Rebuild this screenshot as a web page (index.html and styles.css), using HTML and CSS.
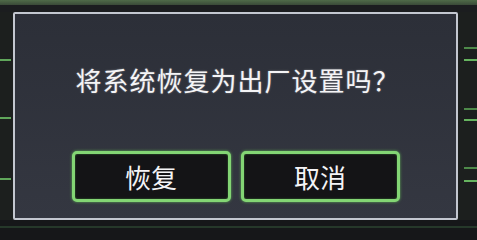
FILE: index.html
```html
<!DOCTYPE html>
<html lang="zh-CN">
<head>
  <meta charset="UTF-8">
  <title>恢复出厂设置</title>
  <link rel="stylesheet" href="styles.css">
</head>
<body>
  <div class="top-strip"></div>
  <div class="screen">
    <div class="side side-left"></div>
    <div class="dialog">
      <p class="message">将系统恢复为出厂设置吗？</p>
      <div class="buttons">
        <button class="btn">恢复</button>
        <button class="btn">取消</button>
      </div>
    </div>
    <div class="side side-right"></div>
  </div>
  <div class="bottom-strip"></div>
</body>
</html>
```

FILE: styles.css
```css
body {
  margin: 0;
  width: 477px;
  height: 240px;
  overflow: hidden;
  background: #1b1d1f;
  font-family: "Noto Sans CJK SC", "Noto Sans", sans-serif;
  color: #f4f4f6;
}

.top-strip {
  height: 5px;
  background: linear-gradient(#4f6b48, #3a4a38);
  margin-bottom: 7px;
}

.screen {
  display: flex;
  height: 208px;
}

.side {
  flex: 1;
  background-color: #1c1f1e;
  background-repeat: no-repeat;
}

.side-left {
  flex: 0 0 13px;
  background-image:
    linear-gradient(#5fa65a, #5fa65a),
    linear-gradient(#5fa65a, #5fa65a),
    linear-gradient(#5fa65a, #5fa65a);
  background-size: 11px 2px;
  background-position: 0 47px, 0 105px, 0 166px;
}

.side-right {
  background-image:
    linear-gradient(#4e8a4a, #4e8a4a),
    linear-gradient(#66b45f, #66b45f),
    linear-gradient(#4e8a4a, #4e8a4a),
    linear-gradient(#66b45f, #66b45f),
    linear-gradient(#4e8a4a, #4e8a4a),
    linear-gradient(#66b45f, #66b45f);
  background-size: 100% 2px;
  background-position: 6px 35px, 6px 47px, 6px 96px, 6px 107px, 6px 155px, 6px 168px;
}

.dialog {
  flex: 0 0 445px;
  box-sizing: border-box;
  border: 2px solid #c3c7d0;
  border-radius: 2px;
  background: linear-gradient(#2c2f38, #343741);
  display: flex;
  flex-direction: column;
  align-items: center;
}

.message {
  margin: 48px 0 0 4px;
  font-size: 26px;
  line-height: 36px;
  letter-spacing: 1px;
  text-shadow: 0 0 2px rgba(255, 255, 255, 0.4);
}

.buttons {
  display: flex;
  gap: 10px;
  margin-top: 53px;
}

.btn {
  width: 159px;
  height: 51px;
  box-sizing: border-box;
  border: 3px solid #83d574;
  border-radius: 5px;
  background: #141416;
  box-shadow: 0 0 3px #5fae55, inset 0 0 2px #3f7a38;
  color: #f4f4f6;
  font-family: inherit;
  font-size: 26px;
  line-height: 1;
  padding: 0;
}

.bottom-strip {
  height: 20px;
  background:
    linear-gradient(#26382a, #26382a) 0 6px / 100% 2px no-repeat,
    #161719;
}
```
